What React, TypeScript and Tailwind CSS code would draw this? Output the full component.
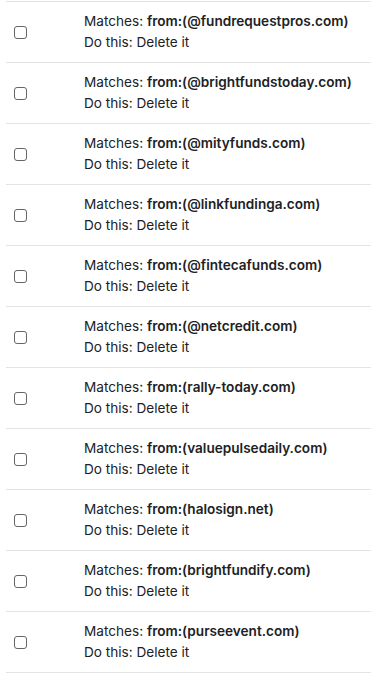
const domains = [
  "@fundrequestpros.com",
  "@brightfundstoday.com",
  "@mityfunds.com",
  "@linkfundinga.com",
  "@fintecafunds.com",
  "@netcredit.com",
  "rally-today.com",
  "valuepulsedaily.com",
  "halosign.net",
  "brightfundify.com",
  "purseevent.com",
];

function FilterRow({ domain }: { domain: string }) {
  return (
    <div className="flex h-[61px] items-center border-b border-[#e3e3e3]">
      <div className="flex w-[78px] shrink-0 pl-[8px]">
        <span className="block h-[13px] w-[13px] rounded-[3px] border border-[#666] bg-white" />
      </div>
      <div className="flex flex-col text-[13.6px] leading-[21px] text-[#202124]">
        <div>
          Matches: <span className="font-semibold">from:({domain})</span>
        </div>
        <div>Do this: Delete it</div>
      </div>
    </div>
  );
}

export default function App() {
  return (
    <div className="min-h-[676px] bg-white pt-[1px] font-['Inter',sans-serif]">
      <div className="ml-[6px] border-t border-[#e3e3e3]">
        {domains.map((d) => (
          <FilterRow key={d} domain={d} />
        ))}
      </div>
    </div>
  );
}
